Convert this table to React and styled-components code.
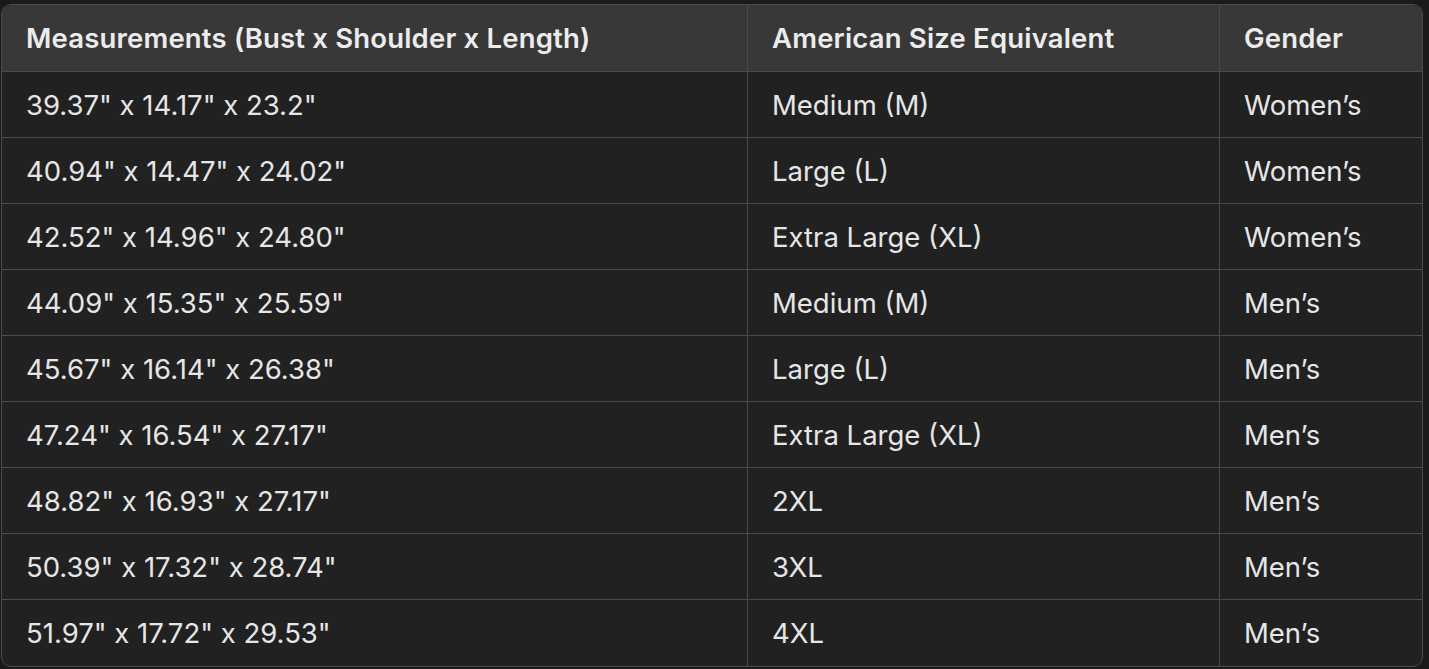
import styled, { createGlobalStyle } from "styled-components";

const GlobalStyle = createGlobalStyle`
  html, body {
    margin: 0;
    padding: 0;
    background: #1a1a1a;
  }
`;

const rows = [
  ['39.37" x 14.17" x 23.2"', "Medium (M)", "Women’s"],
  ['40.94" x 14.47" x 24.02"', "Large (L)", "Women’s"],
  ['42.52" x 14.96" x 24.80"', "Extra Large (XL)", "Women’s"],
  ['44.09" x 15.35" x 25.59"', "Medium (M)", "Men’s"],
  ['45.67" x 16.14" x 26.38"', "Large (L)", "Men’s"],
  ['47.24" x 16.54" x 27.17"', "Extra Large (XL)", "Men’s"],
  ['48.82" x 16.93" x 27.17"', "2XL", "Men’s"],
  ['50.39" x 17.32" x 28.74"', "3XL", "Men’s"],
  ['51.97" x 17.72" x 29.53"', "4XL", "Men’s"],
];

const Page = styled.div`
  padding: 4px 6px 3px 1px;
  font-family: Inter, "Liberation Sans", sans-serif;
`;

const Table = styled.table`
  width: 1422px;
  table-layout: fixed;
  border-collapse: separate;
  border-spacing: 0;
  border: 1px solid #4a4a4a;
  border-radius: 10px;
  overflow: hidden;
  background: #212121;
`;

const Head = styled.th`
  background: #383838;
  color: #ececec;
  font-size: 27.5px;
  font-weight: 600;
  letter-spacing: 0.18px;
  text-align: left;
  height: 67px;
  padding: 0 24px;
  border-bottom: 1px solid #4a4a4a;
  border-left: ${(p) => (p.$first ? "none" : "1px solid #4a4a4a")};
  box-sizing: border-box;
`;

const Cell = styled.td`
  color: #e6e6e6;
  font-size: 27.5px;
  font-weight: 400;
  height: 66px;
  padding: 0 24px;
  border-bottom: ${(p) => (p.$last ? "none" : "1px solid #4a4a4a")};
  border-left: ${(p) => (p.$first ? "none" : "1px solid #4a4a4a")};
  box-sizing: border-box;
`;

export default function App() {
  return (
    <>
      <GlobalStyle />
      <Page>
        <Table>
          <colgroup>
            <col style={{ width: 745 }} />
            <col style={{ width: 472 }} />
            <col />
          </colgroup>
          <thead>
            <tr>
              <Head $first>Measurements (Bust x Shoulder x Length)</Head>
              <Head>American Size Equivalent</Head>
              <Head>Gender</Head>
            </tr>
          </thead>
          <tbody>
            {rows.map((r, i) => (
              <tr key={i}>
                {r.map((c, j) => (
                  <Cell key={j} $first={j === 0} $last={i === rows.length - 1}>
                    {c}
                  </Cell>
                ))}
              </tr>
            ))}
          </tbody>
        </Table>
      </Page>
    </>
  );
}
